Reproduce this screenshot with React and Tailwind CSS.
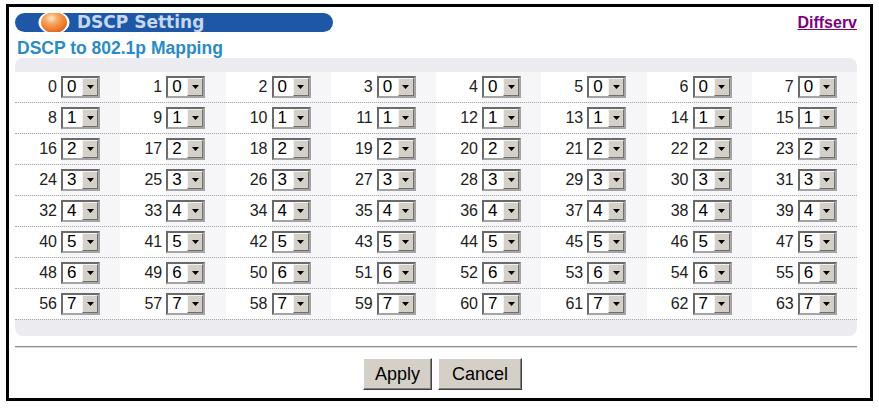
import React from "react";

function Sel({ v }) {
  return (
    <div className="flex h-[22px] w-[39px] border-2 border-t-[#6a6a6a] border-l-[#6a6a6a] border-b-[#a4a4a4] border-r-[#a4a4a4] bg-white">
      <span className="flex-1 pl-[4px] text-[17px] leading-[18px] text-black">{v}</span>
      <div className="flex w-[16px] items-center justify-center border border-t-[#f2f2f2] border-l-[#f2f2f2] border-b-[#707070] border-r-[#707070] bg-[#d4d0c8]">
        <svg width="7" height="4" viewBox="0 0 7 4">
          <path d="M0 0H7L3.5 4Z" fill="#000" />
        </svg>
      </div>
    </div>
  );
}

function Ball() {
  return (
    <svg width="38" height="19" viewBox="0 0 38 19" className="block">
      <defs>
        <radialGradient id="bg" cx="0.4" cy="0.3" r="0.7">
          <stop offset="0" stopColor="#fde6cc" />
          <stop offset="0.35" stopColor="#f6a862" />
          <stop offset="0.8" stopColor="#ec7b2e" />
          <stop offset="1" stopColor="#d9641d" />
        </radialGradient>
      </defs>
      <ellipse cx="19" cy="9.5" rx="15.5" ry="11.5" fill="#ffffff" />
      <ellipse cx="19" cy="9.5" rx="13" ry="10.5" fill="url(#bg)" />
    </svg>
  );
}

export default function App() {
  const rows = Array.from({ length: 8 }, (_, r) => r);
  const cols = Array.from({ length: 8 }, (_, c) => c);
  return (
    <div className="h-[409px] w-[879px] bg-white pl-[6px] pt-[4px] font-['Liberation_Sans',Arial,sans-serif]">
      <div className="w-[867px] border-[3px] border-black px-[6px] pb-[8px] pt-[6px]">
        <div className="flex h-[19px] w-[842px] items-center justify-between">
          <div className="flex h-[19px] w-[318px] items-center rounded-full bg-[#1d57a6] pl-[20px]">
            <Ball />
            <span className="ml-[4px] font-['DejaVu_Sans',Verdana,sans-serif] text-[17px] font-bold leading-[19px] text-[#c6d7f0]">
              DSCP Setting
            </span>
          </div>
          <a className="text-[16px] font-bold leading-[19px] text-[#800080] underline">Diffserv</a>
        </div>
        <div className="mt-[5px] h-[20px] pl-[2px]">
          <span className="whitespace-nowrap text-[17.5px] font-bold leading-[20px] text-[#2a8bc6]">
            DSCP to 802.1p Mapping
          </span>
        </div>
        <div className="mt-[1px] w-[842px] rounded-[8px] bg-[#ecebef] pb-[16px] pt-[14px]">
          {rows.map((r) => (
            <div key={r} className="grid grid-cols-8 border-b border-dotted border-[#a8a8a8]">
              {cols.map((c) => (
                <div key={c} className="flex h-[30px]">
                  <div className="w-[46px] bg-white pr-[4px] pt-[5px] text-right text-[16px] leading-[20px] text-[#222]">
                    {r * 8 + c}
                  </div>
                  <div className="flex-1 bg-[#f6f5f8] pt-[4px]">
                    <Sel v={r} />
                  </div>
                </div>
              ))}
            </div>
          ))}
        </div>
        <div className="mt-[10px] h-[2px] w-[842px] border-t border-b border-t-[#8f8f8f] border-b-[#d8d8d8]" />
        <div className="mt-[10px] flex w-[842px] justify-center gap-[6px] pl-[13px]">
          <button className="h-[32px] w-[69px] border border-t-white border-l-white border-b-[#404040] border-r-[#404040] bg-[#d4d0c8] text-[18px] leading-[20px] text-black shadow-[inset_-1px_-1px_#808080]">
            Apply
          </button>
          <button className="h-[32px] w-[84px] border border-t-white border-l-white border-b-[#404040] border-r-[#404040] bg-[#d4d0c8] text-[18px] leading-[20px] text-black shadow-[inset_-1px_-1px_#808080]">
            Cancel
          </button>
        </div>
      </div>
    </div>
  );
}
